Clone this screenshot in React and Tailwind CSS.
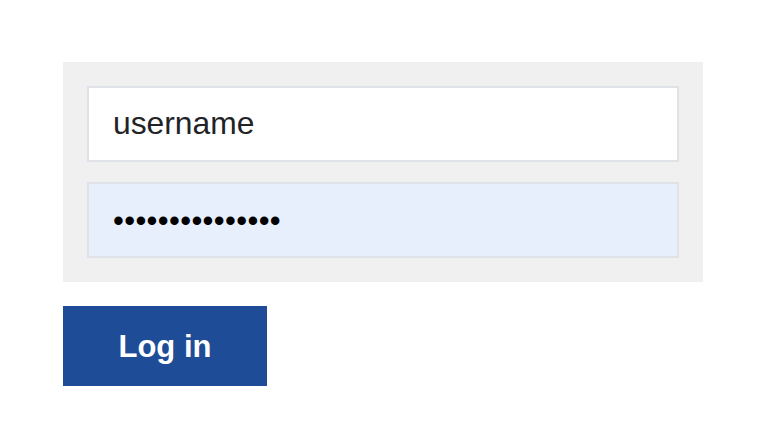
export default function App() {
  return (
    <div className="w-[768px] h-[438px] bg-white pt-[62px] pl-[63px]" style={{ fontFamily: '"Liberation Sans", Arial, sans-serif' }}>
      <div className="w-[640px] bg-[#f0f0f0] p-6 flex flex-col gap-5">
        <div className="h-[76px] bg-white border-2 border-[#dfe2e6] flex items-center pl-6 pb-[1px]">
          <span className="text-[31.8px] leading-none text-[#222326]">username</span>
        </div>
        <div className="h-[76px] bg-[#e8effc] border-2 border-[#dfe2e6] flex items-center pl-6">
          <span className="text-[31px] leading-none text-black tracking-[0.35px]">•••••••••••••••</span>
        </div>
      </div>
      <div className="mt-6 w-[204px] h-[80px] bg-[#1e4c96] flex items-center justify-center">
        <span className="text-[31px] font-bold text-white leading-none">Log in</span>
      </div>
    </div>
  );
}
